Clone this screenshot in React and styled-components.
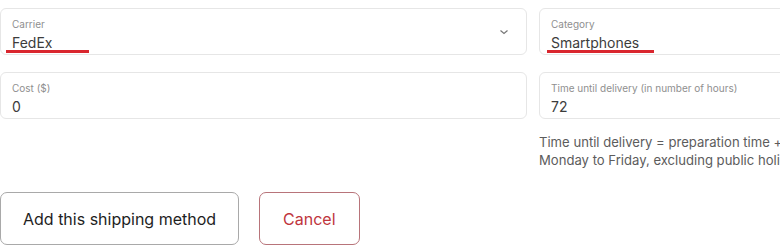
import React from "react";
import styled, { createGlobalStyle } from "styled-components";

const Global = createGlobalStyle`
  html, body { margin: 0; padding: 0; background: #fff; }
  body { font-family: Inter, "Liberation Sans", sans-serif; overflow: hidden; }
`;

const Page = styled.div`
  width: 780px;
  height: 248px;
  overflow: hidden;
  padding-top: 8px;
  box-sizing: border-box;
`;

const Grid = styled.div`
  display: grid;
  grid-template-columns: 527px 527px;
  column-gap: 12px;
  row-gap: 17px;
`;

const Field = styled.div`
  position: relative;
  height: 47px;
  box-sizing: border-box;
  border: 1px solid #e6e6e6;
  border-radius: 6px;
  padding: 9px 11px 0;
  display: flex;
  flex-direction: column;
  background: #fff;
`;

const Label = styled.span`
  font-size: 10px;
  line-height: 13px;
  color: #8f8f8f;
`;

const Value = styled.span`
  font-size: 14px;
  line-height: 19px;
  margin-top: 2px;
  color: #3c3c3c;
`;

const Chevron = styled.svg`
  position: absolute;
  right: 17px;
  top: 19px;
`;

const Mark = styled.span`
  position: absolute;
  top: 41px;
  left: ${(p) => p.$left}px;
  width: ${(p) => p.$width}px;
  height: 3px;
  background: #d9262e;
`;

const Help = styled.p`
  grid-column: 2;
  margin: -3px 0 0;
  font-size: 13.1px;
  line-height: 18px;
  color: #5c5c5c;
  white-space: nowrap;
`;

const Actions = styled.div`
  display: flex;
  gap: 20px;
  margin-top: 23px;
`;

const Button = styled.button`
  height: 53px;
  padding: 0 ${(p) => p.$pad}px;
  border-radius: 7px;
  background: #fff;
  font-family: inherit;
  font-size: 16px;
  border: 1px solid ${(p) => (p.$danger ? "#b8747a" : "#a9a9a9")};
  color: ${(p) => (p.$danger ? "#c0353d" : "#1e1e1e")};
  cursor: pointer;
`;

export default function App() {
  return (
    <Page>
      <Global />
      <Grid>
        <Field>
          <Label>Carrier</Label>
          <Value>FedEx</Value>
          <Mark $left={5} $width={83} />
          <Chevron width="10" height="8" viewBox="0 0 10 8">
            <path d="M1.5 2.5 L5 5.5 L8.5 2.5" fill="none" stroke="#777" strokeWidth="1.2" />
          </Chevron>
        </Field>
        <Field>
          <Label>Category</Label>
          <Value>Smartphones</Value>
          <Mark $left={7} $width={107} />
        </Field>
        <Field>
          <Label>Cost ($)</Label>
          <Value>0</Value>
        </Field>
        <Field>
          <Label>Time until delivery (in number of hours)</Label>
          <Value>72</Value>
        </Field>
        <Help>
          Time until delivery = preparation time + shipping time.
          <br />
          Monday to Friday, excluding public holidays.
        </Help>
      </Grid>
      <Actions>
        <Button $pad={22}>Add this shipping method</Button>
        <Button $danger $pad={23}>Cancel</Button>
      </Actions>
    </Page>
  );
}
